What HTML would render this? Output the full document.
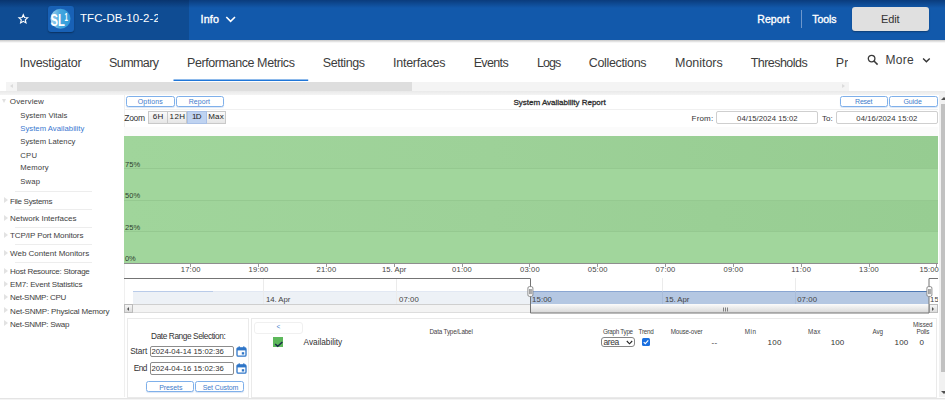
<!DOCTYPE html>
<html lang="en">
<head>
<meta charset="utf-8">
<title>TFC-DB-10-2-2 - Performance Metrics - System Availability Report</title>
<style>
html,body{margin:0;padding:0;background:#fff}
body{width:945px;height:400px;overflow:hidden;font-family:"Liberation Sans",sans-serif}
#root{position:relative;width:945px;height:400px;overflow:hidden;background:#fff}
#root div,#root span,#root svg{position:absolute;box-sizing:border-box}
.t{white-space:nowrap;line-height:1;font-family:"Liberation Sans",sans-serif}
.btn{background:#fff;border:1px solid #7fb0ea;border-radius:2.500px;box-shadow:0 1px 1px rgba(90,140,210,.22)}
.zb{top:111.3px;height:12.4px;border:1px solid #c9c9c9;background:linear-gradient(#fafafa,#e6e6e6)}
.inp{background:#fff;border:1px solid #cfcfcf;border-radius:2px}
.inp2{background:#fff;border:1px solid #8c8c8c;border-radius:2px}
.tri{width:0;height:0;border-style:solid}
.sep{left:15px;width:77px;height:1px;background:#ededed}
.box{border:1px solid #eaeaea;background:#fff}
</style>
</head>
<body>
<div id="root">

<!-- ===== header ===== -->
<div style="left:0;top:0;width:945px;height:40px;background:#1259ab"></div>
<div style="left:0;top:0;width:189px;height:40px;background:#0f4c93"></div>
<div style="left:0;top:0;width:945px;height:8px;background:linear-gradient(rgba(0,20,60,.42),rgba(0,20,60,0))"></div>
<div style="left:0;top:40px;width:945px;height:2.500px;background:linear-gradient(rgba(0,0,0,.22),rgba(0,0,0,0))"></div>
<!-- star -->
<svg style="left:12px;top:8px" width="24" height="24" viewBox="0 0 24 24"><path d="M11.30 6.65 L12.53 9.50 L15.63 9.79 L13.30 11.85 L13.97 14.88 L11.30 13.30 L8.63 14.88 L9.30 11.85 L6.97 9.79 L10.07 9.50Z" fill="none" stroke="#fff" stroke-width="1.150" stroke-linejoin="miter"/></svg>
<!-- logo -->
<div style="left:48px;top:6px;width:25.500px;height:26px;border-radius:3px;background:#1861b6;box-shadow:0 1px 1.500px rgba(0,0,0,.35)"></div>
<svg style="left:48px;top:6px" width="26" height="26" viewBox="0 0 26 26"><defs><linearGradient id="lg" x1="0" y1="0" x2="1" y2="0"><stop offset="0" stop-color="#a9d6f0"/><stop offset=".5" stop-color="#43a5de"/><stop offset="1" stop-color="#319bd9"/></linearGradient></defs><circle cx="12.500" cy="12.800" r="10" fill="url(#lg)"/><text transform="translate(2.600 19.500) scale(.68 1)" font-family="Liberation Sans, sans-serif" font-weight="700" font-size="16.500" fill="#fff">SL</text><text transform="translate(16.600 15.200) scale(.62 1)" font-family="Liberation Sans, sans-serif" font-weight="700" font-size="10" fill="#fff">1</text></svg>
<!-- info chevron -->
<svg style="left:225px;top:15px" width="12" height="9" viewBox="0 0 12 9"><path d="M1.300 2 L5.600 6.400 L10 2" fill="none" stroke="#fff" stroke-width="1.600"/></svg>
<div style="left:801.200px;top:9.500px;width:1px;height:18.500px;background:#6d97cc"></div>
<div style="left:852px;top:7px;width:77px;height:23.500px;border-radius:3px;background:#e0e0e0;box-shadow:0 1px 1.500px rgba(0,0,0,.3)"></div>

<!-- ===== nav ===== -->
<svg style="left:173px;top:78px" width="136" height="4" viewBox="0 0 136 4"><path d="M.5 2.150H135.200" stroke="#1f76d8" stroke-width="1.500"/></svg>
<div style="left:0;top:91px;width:945px;height:4px;background:linear-gradient(#e9e9e9,#f4f4f4)"></div>
<div style="left:6px;top:81.500px;width:842.600px;height:9.300px;background:#f4f4f4"></div>
<div style="left:16.500px;top:81.500px;width:395.200px;height:9.300px;background:#dedede"></div>
<div class="tri" style="left:9.500px;top:84px;border-width:2.200px 3px 2.200px 0;border-color:transparent #dcdcdc transparent transparent"></div>
<div class="tri" style="left:841.500px;top:84px;border-width:2.200px 0 2.200px 3px;border-color:transparent transparent transparent #dcdcdc"></div>
<!-- search + more chevron -->
<svg style="left:867px;top:54px" width="12" height="12" viewBox="0 0 12 12"><circle cx="4.600" cy="4.600" r="3.300" fill="none" stroke="#3a3a3a" stroke-width="1.300"/><path d="M7 7 L10.600 10.600" stroke="#3a3a3a" stroke-width="1.500"/></svg>
<svg style="left:921.500px;top:56.500px" width="9" height="7" viewBox="0 0 9 7"><path d="M1.100 1.600 L4.400 4.800 L7.700 1.600" fill="none" stroke="#333" stroke-width="1.400"/></svg>

<!-- ===== sidebar ===== -->
<div class="tri" style="left:2px;top:99.300px;border-width:4px 2.900px 0 2.900px;border-color:#e0e0e0 transparent transparent transparent"></div>
<div class="sep" style="top:191px"></div>
<div class="sep" style="top:209px"></div>
<div class="sep" style="top:226.500px"></div>
<div class="sep" style="top:244px"></div>
<div class="sep" style="top:262px"></div>
<div class="tri" style="left:3.500px;top:197px;border-width:3.200px 0 3.200px 4.200px;border-color:transparent transparent transparent #e2e2e2"></div>
<div class="tri" style="left:3.500px;top:214.500px;border-width:3.200px 0 3.200px 4.200px;border-color:transparent transparent transparent #e2e2e2"></div>
<div class="tri" style="left:3.500px;top:232px;border-width:3.200px 0 3.200px 4.200px;border-color:transparent transparent transparent #e2e2e2"></div>
<div class="tri" style="left:3.500px;top:249.500px;border-width:3.200px 0 3.200px 4.200px;border-color:transparent transparent transparent #e2e2e2"></div>
<div class="tri" style="left:3.500px;top:267.500px;border-width:3.200px 0 3.200px 4.200px;border-color:transparent transparent transparent #e2e2e2"></div>
<div class="tri" style="left:3.500px;top:280.500px;border-width:3.200px 0 3.200px 4.200px;border-color:transparent transparent transparent #e2e2e2"></div>
<div class="tri" style="left:3.500px;top:294px;border-width:3.200px 0 3.200px 4.200px;border-color:transparent transparent transparent #e2e2e2"></div>
<div class="tri" style="left:3.500px;top:307px;border-width:3.200px 0 3.200px 4.200px;border-color:transparent transparent transparent #e2e2e2"></div>
<div class="tri" style="left:3.500px;top:320px;border-width:3.200px 0 3.200px 4.200px;border-color:transparent transparent transparent #e2e2e2"></div>

<!-- ===== chart panel ===== -->
<div style="left:124px;top:95px;width:1px;height:302px;background:#efefef"></div>
<div style="left:124px;top:109px;width:814px;height:1px;background:#f0f0f0"></div>
<div class="btn" style="left:126px;top:96px;width:49px;height:11.200px"></div>
<div class="btn" style="left:176px;top:96px;width:48px;height:11.200px"></div>
<div class="btn" style="left:840px;top:96px;width:48px;height:11.200px"></div>
<div class="btn" style="left:889px;top:96px;width:48.500px;height:11.200px"></div>
<div class="zb" style="left:148.300px;width:19.500px"></div>
<div class="zb" style="left:167.300px;width:19.900px"></div>
<div class="zb" style="left:206.200px;width:19.800px"></div>
<div class="zb" style="left:186.700px;width:20px;background:#bfd3f1;border-color:#a9c0e6"></div>
<div class="inp" style="left:715.900px;top:111.200px;width:102.300px;height:12.600px"></div>
<div class="inp" style="left:835.600px;top:111.200px;width:102.400px;height:12.600px"></div>
<div style="left:124px;top:126.500px;width:814px;height:9.500px;background:#fbfbfb"></div>

<!-- plot -->
<div style="left:124px;top:136px;width:814px;height:127px;background:#a1d69c"></div>
<div style="left:124px;top:136px;width:814px;height:32px;background:linear-gradient(to right,#a0d59b,#9dd198 45%,#96cc91)"></div>
<div style="left:124px;top:200px;width:814px;height:31px;background:linear-gradient(to right,#a0d59b,#9dd198 45%,#97cd92)"></div>
<div style="left:124px;top:168px;width:814px;height:1px;background:#95c990"></div>
<div style="left:124px;top:200px;width:814px;height:1px;background:#95c990"></div>
<div style="left:124px;top:231px;width:814px;height:1px;background:#95c990"></div>
<div style="left:124px;top:263px;width:814px;height:1px;background:#8e8e8e"></div>
<div style="left:190.2px;top:264px;width:1px;height:3px;background:#9a9a9a"></div>
<div style="left:258.0px;top:264px;width:1px;height:3px;background:#9a9a9a"></div>
<div style="left:325.9px;top:264px;width:1px;height:3px;background:#9a9a9a"></div>
<div style="left:393.7px;top:264px;width:1px;height:3px;background:#9a9a9a"></div>
<div style="left:461.5px;top:264px;width:1px;height:3px;background:#9a9a9a"></div>
<div style="left:529.3px;top:264px;width:1px;height:3px;background:#9a9a9a"></div>
<div style="left:597.2px;top:264px;width:1px;height:3px;background:#9a9a9a"></div>
<div style="left:665.0px;top:264px;width:1px;height:3px;background:#9a9a9a"></div>
<div style="left:732.8px;top:264px;width:1px;height:3px;background:#9a9a9a"></div>
<div style="left:800.7px;top:264px;width:1px;height:3px;background:#9a9a9a"></div>
<div style="left:868.5px;top:264px;width:1px;height:3px;background:#9a9a9a"></div>
<div style="left:936.3px;top:264px;width:1px;height:3px;background:#9a9a9a"></div>

<!-- navigator -->
<div style="left:133px;top:291px;width:397.500px;height:13.400px;background:#edf1f6"></div>
<div style="left:133px;top:290.600px;width:397.500px;height:1px;background:#e2e8f3"></div>
<div style="left:133px;top:290.600px;width:80px;height:1px;background:#b9cbe9"></div>
<div style="left:530.500px;top:291px;width:398.500px;height:13.400px;background:#b4c7e2"></div>
<div style="left:530.500px;top:290.500px;width:398.500px;height:1px;background:#8aa6d2"></div>
<div style="left:849.500px;top:290.500px;width:79.500px;height:1.200px;background:#4f79b4"></div>
<div style="left:263px;top:278px;width:1px;height:26px;background:#ebebeb"></div>
<div style="left:396px;top:278px;width:1px;height:26px;background:#ebebeb"></div>
<div style="left:662px;top:278px;width:1px;height:26px;background:#a9bcd9;height:26px"></div>
<div style="left:662px;top:278px;width:1px;height:13px;background:#ebebeb"></div>
<div style="left:794.500px;top:278px;width:1px;height:13px;background:#ebebeb"></div>
<div style="left:794.500px;top:291px;width:1px;height:13px;background:#a9bcd9"></div>
<!-- navigator scrollbar -->
<div style="left:124px;top:304.400px;width:814px;height:8.800px;background:#f3f3f3;border-top:1px solid #cfcfcf;border-bottom:1px solid #ddd"></div>
<div style="left:530.500px;top:304.400px;width:398.500px;height:8.800px;background:linear-gradient(#fbfbfb,#d6d6d6)"></div>
<div style="left:124px;top:304.400px;width:9px;height:8.800px;background:linear-gradient(#f6f6f6,#dcdcdc);border:1px solid #bbb"></div>
<div style="left:929px;top:304.400px;width:9px;height:8.800px;background:linear-gradient(#f6f6f6,#dcdcdc);border:1px solid #bbb"></div>
<div class="tri" style="left:126.700px;top:306.800px;border-width:2px 2.600px 2px 0;border-color:transparent #555 transparent transparent"></div>
<div class="tri" style="left:932.300px;top:306.800px;border-width:2px 0 2px 2.600px;border-color:transparent transparent transparent #555"></div>
<svg style="left:722px;top:306.500px" width="8" height="5" viewBox="0 0 8 5"><path d="M1.500 0.500v4M3.500 0.500v4M5.500 0.500v4" stroke="#666" stroke-width=".8"/></svg>
<!-- navigator outline -->
<svg style="left:124px;top:277px" width="815" height="38" viewBox="0 0 815 38"><path d="M0 1.500 H406.500 V36 H805 V1.500 H814" fill="none" stroke="#747474" stroke-width="1"/></svg>
<!-- handles -->
<svg style="left:527px;top:285.500px" width="7" height="11" viewBox="0 0 7 11"><rect x=".9" y=".6" width="5" height="9.800" rx="1.500" fill="#fff" stroke="#808080" stroke-width=".9"/><path d="M2.800 3v5.200M4.100 3v5.200" stroke="#555" stroke-width=".8"/></svg>
<svg style="left:925.500px;top:285.500px" width="7" height="11" viewBox="0 0 7 11"><rect x=".9" y=".6" width="5" height="9.800" rx="1.500" fill="#fff" stroke="#808080" stroke-width=".9"/><path d="M2.800 3v5.200M4.100 3v5.200" stroke="#555" stroke-width=".8"/></svg>

<!-- bottom panels -->
<div class="box" style="left:127px;top:318.400px;width:122px;height:80px"></div>
<div class="box" style="left:251.300px;top:318.400px;width:686px;height:80px"></div>
<div class="inp2" style="left:150.400px;top:345.600px;width:83.300px;height:11.800px"></div>
<div class="inp2" style="left:150.400px;top:362.400px;width:83.300px;height:12.200px"></div>
<div class="btn" style="left:146px;top:381px;width:48.400px;height:11.400px"></div>
<div class="btn" style="left:195.400px;top:381px;width:48.400px;height:11.400px"></div>
<svg style="left:235.800px;top:346px" width="11" height="11" viewBox="0 0 11 11"><rect x="1" y="1.800" width="9" height="8.400" rx="1.200" fill="#fff" stroke="#2f76c8" stroke-width="1.300"/><rect x="1" y="1.800" width="9" height="2.600" fill="#2f76c8"/><rect x="2.600" y=".3" width="1.200" height="2.200" fill="#2f76c8"/><rect x="7.200" y=".3" width="1.200" height="2.200" fill="#2f76c8"/><rect x="5.800" y="6.200" width="2.400" height="2.300" fill="#2f76c8"/></svg>
<svg style="left:235.800px;top:363px" width="11" height="11" viewBox="0 0 11 11"><rect x="1" y="1.800" width="9" height="8.400" rx="1.200" fill="#fff" stroke="#2f76c8" stroke-width="1.300"/><rect x="1" y="1.800" width="9" height="2.600" fill="#2f76c8"/><rect x="2.600" y=".3" width="1.200" height="2.200" fill="#2f76c8"/><rect x="7.200" y=".3" width="1.200" height="2.200" fill="#2f76c8"/><rect x="5.800" y="6.200" width="2.400" height="2.300" fill="#2f76c8"/></svg>

<div style="left:253.500px;top:322.400px;width:49px;height:12px;border:1px solid #f0f0f0;border-radius:3px;background:#fff"></div>
<div style="left:273px;top:337px;width:10.300px;height:10.200px;background:#5db85b"></div>
<svg style="left:273px;top:337px" width="11" height="11" viewBox="0 0 11 11"><path d="M2.200 6.900 L4.700 9.300 L9.400 4.900" fill="none" stroke="#1d2b4a" stroke-width="1.400"/></svg>
<div style="left:600.500px;top:336.500px;width:34.400px;height:10.800px;border:1px solid #858585;border-radius:3px;background:#fff"></div>
<svg style="left:625.500px;top:339.500px" width="7" height="5" viewBox="0 0 7 5"><path d="M.8 1 L3.500 3.800 L6.200 1" fill="none" stroke="#222" stroke-width="1.100"/></svg>
<div style="left:642.200px;top:337.900px;width:8px;height:8px;border-radius:1.500px;background:#1a6fe0"></div>
<svg style="left:642.200px;top:337.900px" width="8" height="8" viewBox="0 0 8 8"><path d="M1.700 4.100 L3.300 5.700 L6.300 2.300" fill="none" stroke="#fff" stroke-width="1.100"/></svg>

<!-- right scrollbar -->
<div style="left:939px;top:95px;width:6px;height:302px;background:#f1f1f1"></div>
<div style="left:940.500px;top:103.500px;width:6px;height:268px;background:#c1c1c1"></div>
<div class="tri" style="left:940.500px;top:97.200px;border-width:0 3.500px 3px 3.500px;border-color:transparent transparent #505050 transparent"></div>
<div class="tri" style="left:940.500px;top:391px;border-width:3px 3.500px 0 3.500px;border-color:#505050 transparent transparent transparent"></div>
<!-- bottom strip -->
<div style="left:0;top:397.500px;width:945px;height:2.500px;background:#f4f4f4;border-top:1px solid #e4e4e4"></div>

<!-- text -->
<span class="t" style="left:80.0px;top:13px;font-size:11.5px;letter-spacing:0.051px;color:#fff;width:78.0px;overflow:hidden">TFC-DB-10-2-2</span>
<span class="t" style="left:200.5px;top:14px;font-size:10.7px;letter-spacing:0.214px;color:#fff;-webkit-text-stroke:0.35px #fff">Info</span>
<span class="t" style="left:757.2px;top:14px;font-size:10.5px;letter-spacing:0.127px;color:#fff;-webkit-text-stroke:0.35px #fff">Report</span>
<span class="t" style="left:812.2px;top:14px;font-size:10.5px;letter-spacing:-0.041px;color:#fff;-webkit-text-stroke:0.35px #fff">Tools</span>
<span class="t" style="left:881.0px;top:14px;font-size:11px;letter-spacing:-0.123px;color:#333">Edit</span>
<span class="t" style="left:19.7px;top:57px;font-size:12.5px;letter-spacing:-0.243px;color:#3c3c3c">Investigator</span>
<span class="t" style="left:109.0px;top:57px;font-size:12.5px;letter-spacing:-0.572px;color:#3c3c3c">Summary</span>
<span class="t" style="left:187.0px;top:57px;font-size:12.5px;letter-spacing:-0.409px;color:#3c3c3c">Performance Metrics</span>
<span class="t" style="left:322.8px;top:57px;font-size:12.5px;letter-spacing:-0.432px;color:#3c3c3c">Settings</span>
<span class="t" style="left:393.1px;top:57px;font-size:12.5px;letter-spacing:-0.271px;color:#3c3c3c">Interfaces</span>
<span class="t" style="left:473.7px;top:57px;font-size:12.5px;letter-spacing:-0.654px;color:#3c3c3c">Events</span>
<span class="t" style="left:537.1px;top:57px;font-size:12.5px;letter-spacing:-0.986px;color:#3c3c3c">Logs</span>
<span class="t" style="left:588.7px;top:57px;font-size:12.5px;letter-spacing:-0.329px;color:#3c3c3c">Collections</span>
<span class="t" style="left:675.0px;top:57px;font-size:12.5px;letter-spacing:-0.027px;color:#3c3c3c">Monitors</span>
<span class="t" style="left:750.7px;top:57px;font-size:12.5px;letter-spacing:-0.544px;color:#3c3c3c">Thresholds</span>
<span class="t" style="left:835.8px;top:57px;font-size:12.5px;letter-spacing:0.030px;color:#3c3c3c;width:12.7px;overflow:hidden">Properties</span>
<span class="t" style="left:885.4px;top:54px;font-size:12px;letter-spacing:0.285px;color:#3c3c3c">More</span>
<span class="t" style="left:9.8px;top:98px;font-size:8px;letter-spacing:0.108px;color:#3e3e3e">Overview</span>
<span class="t" style="left:10.1px;top:198px;font-size:8px;letter-spacing:-0.318px;color:#3e3e3e">File Systems</span>
<span class="t" style="left:10.1px;top:215px;font-size:8px;letter-spacing:-0.024px;color:#3e3e3e">Network Interfaces</span>
<span class="t" style="left:10.1px;top:232px;font-size:8px;letter-spacing:-0.112px;color:#3e3e3e">TCP/IP Port Monitors</span>
<span class="t" style="left:10.1px;top:250px;font-size:8px;letter-spacing:-0.019px;color:#3e3e3e">Web Content Monitors</span>
<span class="t" style="left:10.1px;top:268px;font-size:8px;letter-spacing:-0.270px;color:#3e3e3e">Host Resource: Storage</span>
<span class="t" style="left:10.1px;top:281px;font-size:8px;letter-spacing:-0.165px;color:#3e3e3e">EM7: Event Statistics</span>
<span class="t" style="left:10.1px;top:294px;font-size:8px;letter-spacing:-0.272px;color:#3e3e3e">Net-SNMP: CPU</span>
<span class="t" style="left:10.1px;top:308px;font-size:8px;letter-spacing:-0.178px;color:#3e3e3e">Net-SNMP: Physical Memory</span>
<span class="t" style="left:10.1px;top:321px;font-size:8px;letter-spacing:-0.261px;color:#3e3e3e">Net-SNMP: Swap</span>
<span class="t" style="left:20.3px;top:112px;font-size:7.7px;letter-spacing:0.053px;color:#3e3e3e">System Vitals</span>
<span class="t" style="left:20.3px;top:125px;font-size:7.7px;letter-spacing:0.030px;color:#3b78d0">System Availability</span>
<span class="t" style="left:20.3px;top:138px;font-size:7.7px;letter-spacing:0.028px;color:#3e3e3e">System Latency</span>
<span class="t" style="left:20.3px;top:152px;font-size:7.7px;letter-spacing:0.268px;color:#3e3e3e">CPU</span>
<span class="t" style="left:20.3px;top:164px;font-size:7.7px;letter-spacing:0.121px;color:#3e3e3e">Memory</span>
<span class="t" style="left:20.3px;top:178px;font-size:7.7px;letter-spacing:0.179px;color:#3e3e3e">Swap</span>
<span class="t" style="left:137.8px;top:98px;font-size:7px;letter-spacing:0.129px;color:#3f7ccc">Options</span>
<span class="t" style="left:188.7px;top:98px;font-size:7px;letter-spacing:0.057px;color:#3f7ccc">Report</span>
<span class="t" style="left:855.1px;top:98px;font-size:7px;letter-spacing:-0.224px;color:#3f7ccc">Reset</span>
<span class="t" style="left:903.4px;top:98px;font-size:7px;letter-spacing:-0.072px;color:#3f7ccc">Guide</span>
<span class="t" style="left:513.5px;top:99px;font-size:8px;letter-spacing:-0.006px;color:#2e2e2e;-webkit-text-stroke:0.3px #2e2e2e">System Availability Report</span>
<span class="t" style="left:124.3px;top:114px;font-size:8.5px;letter-spacing:-0.328px;color:#333">Zoom</span>
<span class="t" style="left:152.7px;top:113px;font-size:8px;letter-spacing:0.466px;color:#222">6H</span>
<span class="t" style="left:169.6px;top:113px;font-size:8px;letter-spacing:0.406px;color:#222">12H</span>
<span class="t" style="left:192.0px;top:113px;font-size:8px;letter-spacing:-0.634px;color:#222">1D</span>
<span class="t" style="left:208.2px;top:113px;font-size:8px;letter-spacing:0.188px;color:#222">Max</span>
<span class="t" style="left:691.6px;top:115px;font-size:8px;letter-spacing:0.177px;color:#333">From:</span>
<span class="t" style="left:822.1px;top:115px;font-size:8px;letter-spacing:-0.036px;color:#333">To:</span>
<span class="t" style="left:737.1px;top:115px;font-size:7.7px;letter-spacing:0.041px;color:#333">04/15/2024 15:02</span>
<span class="t" style="left:856.3px;top:115px;font-size:7.7px;letter-spacing:0.081px;color:#333">04/16/2024 15:02</span>
<span class="t" style="left:125.0px;top:161px;font-size:7.5px;letter-spacing:0.117px;color:#2f3f2f">75%</span>
<span class="t" style="left:125.0px;top:192px;font-size:7.5px;letter-spacing:0.117px;color:#2f3f2f">50%</span>
<span class="t" style="left:125.0px;top:224px;font-size:7.5px;letter-spacing:0.117px;color:#2f3f2f">25%</span>
<span class="t" style="left:125.0px;top:255px;font-size:7.5px;letter-spacing:-0.094px;color:#2f3f2f">0%</span>
<span class="t" style="left:180.8px;top:266px;font-size:7.6px;letter-spacing:0.186px;color:#444">17:00</span>
<span class="t" style="left:248.6px;top:266px;font-size:7.6px;letter-spacing:0.186px;color:#444">19:00</span>
<span class="t" style="left:316.5px;top:266px;font-size:7.6px;letter-spacing:0.186px;color:#444">21:00</span>
<span class="t" style="left:382.1px;top:266px;font-size:7.6px;letter-spacing:0.030px;color:#444">15. Apr</span>
<span class="t" style="left:452.1px;top:266px;font-size:7.6px;letter-spacing:0.186px;color:#444">01:00</span>
<span class="t" style="left:520.0px;top:266px;font-size:7.6px;letter-spacing:0.186px;color:#444">03:00</span>
<span class="t" style="left:587.8px;top:266px;font-size:7.6px;letter-spacing:0.186px;color:#444">05:00</span>
<span class="t" style="left:655.6px;top:266px;font-size:7.6px;letter-spacing:0.186px;color:#444">07:00</span>
<span class="t" style="left:723.5px;top:266px;font-size:7.6px;letter-spacing:0.186px;color:#444">09:00</span>
<span class="t" style="left:791.3px;top:266px;font-size:7.6px;letter-spacing:0.327px;color:#444">11:00</span>
<span class="t" style="left:859.1px;top:266px;font-size:7.6px;letter-spacing:0.186px;color:#444">13:00</span>
<span class="t" style="left:919.6px;top:266px;font-size:7.6px;letter-spacing:0.011px;color:#444">15:00</span>
<span class="t" style="left:266.0px;top:296px;font-size:7.8px;letter-spacing:-0.073px;color:#444">14. Apr</span>
<span class="t" style="left:399.0px;top:296px;font-size:7.8px;letter-spacing:0.066px;color:#444">07:00</span>
<span class="t" style="left:532.1px;top:296px;font-size:7.8px;letter-spacing:0.066px;color:#444">15:00</span>
<span class="t" style="left:665.0px;top:296px;font-size:7.8px;letter-spacing:-0.073px;color:#444">15. Apr</span>
<span class="t" style="left:797.2px;top:296px;font-size:7.8px;letter-spacing:0.066px;color:#444">07:00</span>
<span class="t" style="left:930.1px;top:296px;font-size:7.8px;letter-spacing:0.066px;color:#444;width:7.9px;overflow:hidden">15:00</span>
<span class="t" style="left:151.1px;top:332px;font-size:8.3px;letter-spacing:-0.420px;color:#333">Date Range Selection:</span>
<span class="t" style="left:130.2px;top:347px;font-size:8.3px;letter-spacing:-0.125px;color:#333">Start</span>
<span class="t" style="left:133.8px;top:364px;font-size:8.3px;letter-spacing:-0.568px;color:#333">End</span>
<span class="t" style="left:151.4px;top:348px;font-size:7.7px;letter-spacing:0.060px;color:#333">2024-04-14 15:02:36</span>
<span class="t" style="left:151.4px;top:365px;font-size:7.7px;letter-spacing:0.060px;color:#333">2024-04-16 15:02:36</span>
<span class="t" style="left:159.2px;top:384px;font-size:7px;letter-spacing:-0.089px;color:#3f7ccc">Presets</span>
<span class="t" style="left:202.7px;top:384px;font-size:7px;letter-spacing:-0.098px;color:#3f7ccc">Set Custom</span>
<span class="t" style="left:276.4px;top:324px;font-size:6.5px;letter-spacing:-0.347px;color:#3f7ccc">&lt;</span>
<span class="t" style="left:303.6px;top:338px;font-size:8.3px;letter-spacing:-0.038px;color:#333">Availability</span>
<span class="t" style="left:429.5px;top:329px;font-size:6.3px;letter-spacing:-0.173px;color:#444">Data Type/Label</span>
<span class="t" style="left:602.9px;top:329px;font-size:6.3px;letter-spacing:-0.285px;color:#444">Graph Type</span>
<span class="t" style="left:638.5px;top:329px;font-size:6.3px;letter-spacing:-0.222px;color:#444">Trend</span>
<span class="t" style="left:670.7px;top:329px;font-size:6.3px;letter-spacing:-0.147px;color:#444">Mouse-over</span>
<span class="t" style="left:744.7px;top:329px;font-size:6.3px;letter-spacing:0.587px;color:#444">Min</span>
<span class="t" style="left:808.0px;top:329px;font-size:6.3px;letter-spacing:0.212px;color:#444">Max</span>
<span class="t" style="left:872.5px;top:329px;font-size:6.3px;letter-spacing:-0.060px;color:#444">Avg</span>
<span class="t" style="left:913.1px;top:322px;font-size:6.3px;letter-spacing:-0.085px;color:#444">Missed</span>
<span class="t" style="left:916.5px;top:329px;font-size:6.3px;letter-spacing:-0.207px;color:#444">Polls</span>
<span class="t" style="left:603.5px;top:338px;font-size:8.5px;letter-spacing:-0.422px;color:#333">area</span>
<span class="t" style="left:711.6px;top:339px;font-size:8px;letter-spacing:0.172px;color:#333">--</span>
<span class="t" style="left:767.5px;top:339px;font-size:8px;letter-spacing:0.270px;color:#333">100</span>
<span class="t" style="left:830.8px;top:339px;font-size:8px;letter-spacing:0.070px;color:#333">100</span>
<span class="t" style="left:894.6px;top:339px;font-size:8px;letter-spacing:0.170px;color:#333">100</span>
<span class="t" style="left:919.6px;top:339px;font-size:8px;letter-spacing:1.347px;color:#333">0</span>
</div>
</body>
</html>
